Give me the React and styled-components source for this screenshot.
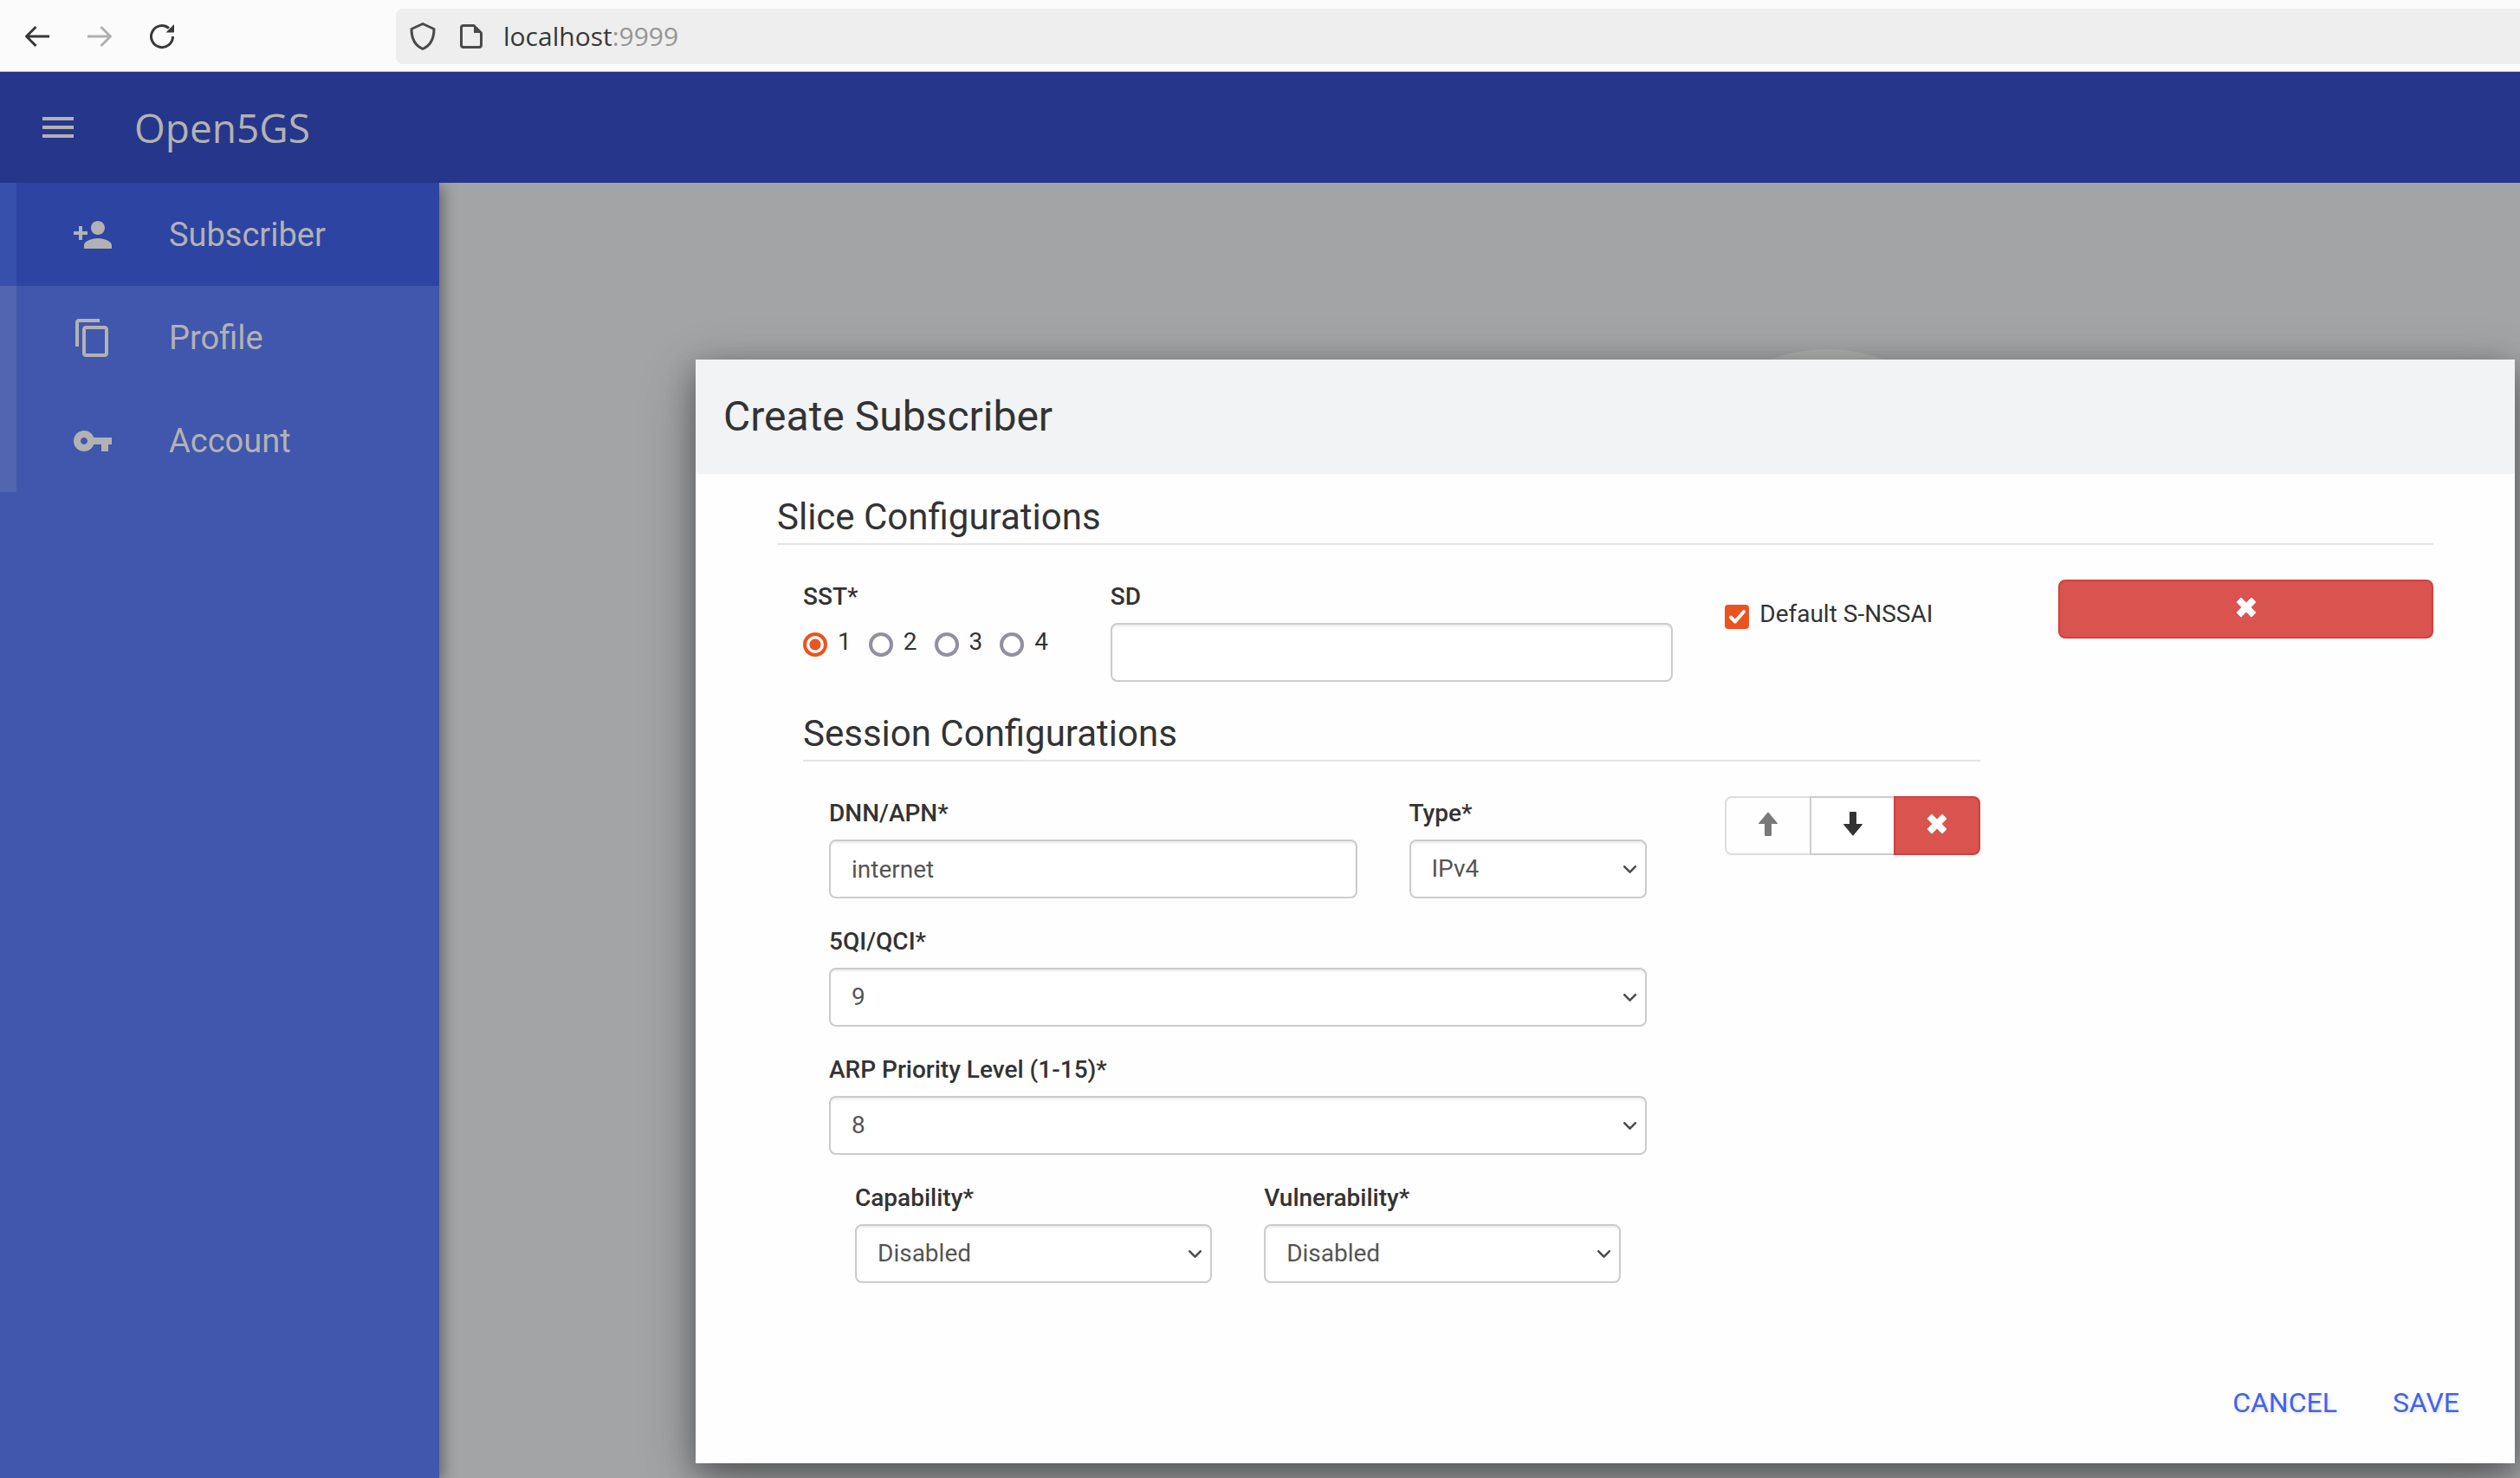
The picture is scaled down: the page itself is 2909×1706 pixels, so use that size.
import React from "react";
import styled, { createGlobalStyle, css } from "styled-components";

const GlobalStyle = createGlobalStyle`
  *, *::before, *::after { box-sizing: border-box; }
  html, body, #root { height: 100%; }
  body {
    margin: 0;
    font-family: Roboto, "Liberation Sans", sans-serif;
    font-size: 28px;
    line-height: 40px;
    color: #333;
    background: #a3a4a6;
  }
  button, input, select { font: inherit; margin: 0; }
`;

const Page = styled.div`
  display: flex;
  flex-direction: column;
  min-height: 100%;
  overflow-x: hidden;
`;

const BrowserBar = styled.div`
  display: flex;
  align-items: center;
  height: 83px;
  padding: 10px 0 9px 24px;
  background: #fbfbfb;
  border-bottom: 1px solid #c8c8c8;
`;

const NavButtons = styled.div`
  display: flex;
  gap: 34px;
  width: 433px;
`;

const ToolButton = styled.button`
  display: flex;
  padding: 0;
  border: 0;
  background: none;
  color: ${(p) => (p.disabled ? "#b0b0b0" : "#383838")};
`;

const AddressBar = styled.div`
  flex: 1;
  display: flex;
  align-items: center;
  gap: 18px;
  height: 64px;
  padding-left: 12px;
  background: #eeeeee;
  border-radius: 8px 0 0 8px;
  color: #4a4a4a;
`;

const Address = styled.span`
  font-family: "Open Sans", "Noto Sans", sans-serif;
  font-size: 30px;
  color: #383838;
`;

const Port = styled.span`
  color: #959595;
`;

const AppHeader = styled.header`
  display: flex;
  align-items: center;
  gap: 64px;
  height: 128px;
  padding: 0 43px;
  background: #26368b;
  color: #b2b2b2;
`;

const MenuButton = styled(ToolButton)`
  color: inherit;
`;

const AppTitle = styled.h1`
  margin: 0;
  font-family: "Open Sans", "Noto Sans", sans-serif;
  font-size: 46px;
  line-height: 64px;
  font-weight: 400;
`;

const Body = styled.div`
  flex: 1;
  display: flex;
`;

const Sidebar = styled.nav`
  position: relative;
  z-index: 1;
  flex: none;
  width: 507px;
  background: #4057ad;
  box-shadow: 4px 4px 16px rgba(0, 0, 0, 0.4);
  clip-path: inset(0 -40px 0 0);
`;

const NavItem = styled.a`
  display: flex;
  align-items: center;
  gap: 64px;
  height: 119px;
  padding-left: 64px;
  border-left: 19px solid ${(p) => (p.$active ? "#3650ac" : "#5265af")};
  background: ${(p) => (p.$active ? "#2d44a3" : "transparent")};
  color: #b2b2b2;
  font-size: 38px;
  text-decoration: none;
`;

const Content = styled.main`
  position: relative;
  flex: 1;
  min-width: 0;
  padding: 204px 6px 17px 296px;
  overflow: hidden;
`;

const Backdrop = styled.div`
  position: absolute;
  top: 192px;
  left: 50%;
  width: 366px;
  height: 366px;
  margin-left: 218px;
  border-radius: 50%;
  background: #adafad;
`;

const Dialog = styled.form`
  position: relative;
  display: flex;
  flex-direction: column;
  height: 100%;
  background: #fefefe;
  box-shadow: 0 20px 60px rgba(0, 0, 0, 0.3), 0 10px 30px rgba(0, 0, 0, 0.3);
`;

const DialogTitle = styled.h2`
  margin: 0;
  padding: 34px 32px;
  background: #f1f3f5;
  font-size: 48px;
  line-height: 64px;
  font-weight: 400;
`;

const DialogBody = styled.div`
  flex: 1;
  padding: 20px 94px 0;
`;

const DialogActions = styled.div`
  display: flex;
  justify-content: flex-end;
  padding: 34px 32px;
`;

const ActionButton = styled.button`
  height: 72px;
  padding: 0 32px;
  border: 0;
  background: none;
  color: #4263eb;
  font-size: 32px;
  text-shadow: 2px 2px 4px rgba(0, 0, 0, 0.12);
`;

const SectionTitle = styled.h3`
  margin: 0 0 40px;
  border-bottom: 2px solid #e5e5e5;
  font-size: 42px;
  line-height: 60px;
  font-weight: 400;
`;

const Grid = styled.div`
  display: grid;
  grid-template-columns: repeat(12, minmax(0, 1fr));
  align-items: start;
  margin: 0 ${(p) => (p.$bleed ? "-30px" : "0")};
`;

const Col = styled.div`
  grid-column: span ${(p) => p.$span};
  padding: 0 30px;
`;

const Inset = styled.div`
  padding: 0 30px;
`;

const FieldBox = styled.div`
  margin-bottom: 30px;
`;

const labelText = css`
  display: block;
  margin-bottom: 10px;
  padding: 0;
  font-weight: 500;
`;

const Label = styled.label`
  ${labelText}
`;

const RadioSet = styled.fieldset`
  margin: 0;
  padding: 0;
  border: 0;
`;

const RadioLegend = styled.legend`
  ${labelText}
`;

const control = css`
  display: block;
  width: 100%;
  height: 68px;
  padding: 0 24px;
  border: 2px solid #ccc;
  border-radius: 8px;
  background: #fff;
  color: #555;
  box-shadow: inset 0 2px 2px rgba(0, 0, 0, 0.075);
`;

const TextInput = styled.input`
  ${control}
`;

const SelectWrap = styled.div`
  display: grid;
  align-items: center;
  > * { grid-area: 1 / 1; }
  > svg {
    justify-self: end;
    margin-right: 12px;
    pointer-events: none;
  }
`;

const Select = styled.select`
  ${control}
  appearance: none;
`;

const Choices = styled.div`
  display: flex;
  gap: 20px;
  padding-top: 2px;
`;

const Choice = styled.label`
  display: flex;
  gap: 12px;
`;

const Radio = styled.input`
  appearance: none;
  flex: none;
  width: 28px;
  height: 28px;
  margin-top: 9px !important;
  border: 4px solid #9190a0;
  border-radius: 50%;
  background: #fff;
  &:checked {
    border-color: #e95420;
    background: radial-gradient(circle, #e95420 6px, #fff 7px);
  }
`;

const CheckRow = styled.div`
  display: flex;
  padding-top: 20px;
`;

const CheckBox = styled.span`
  display: grid;
  width: 28px;
  height: 28px;
  margin-top: 9px;
  > * { grid-area: 1 / 1; }
  > svg { pointer-events: none; }
`;

const CheckInput = styled.input`
  appearance: none;
  width: 28px;
  height: 28px;
  border-radius: 4px;
  background: #e95420;
`;

const IconButton = styled.button`
  display: flex;
  align-items: center;
  justify-content: center;
  width: 100%;
  height: 68px;
  padding: 0 0 4px;
  border: 2px solid ${(p) => (p.$danger ? "#d43f3a" : "#ccc")};
  border-radius: 8px;
  background: ${(p) => (p.$danger ? "#d9534f" : "#fff")};
  color: ${(p) => (p.$danger ? "#fff" : "#333")};
  &:disabled { opacity: 0.65; }
`;

const ButtonGroup = styled.div`
  display: flex;
  > button + button { margin-left: -2px; }
  > button:not(:first-child) { border-top-left-radius: 0; border-bottom-left-radius: 0; }
  > button:not(:last-child) { border-top-right-radius: 0; border-bottom-right-radius: 0; }
`;

const MaterialIcon = ({ d }) => (
  <svg width="48" height="48" viewBox="0 0 24 24" fill="currentColor" aria-hidden="true">
    <path d={d} />
  </svg>
);

const ChromeIcon = ({ children }) => (
  <svg width="38" height="38" viewBox="0 0 38 38" fill="none" stroke="currentColor" strokeWidth="3" strokeLinejoin="round" aria-hidden="true">
    {children}
  </svg>
);

const Cross = () => (
  <svg width="24" height="24" viewBox="0 0 24 24" fill="currentColor" aria-hidden="true">
    <path d="M6.6 1 12 6.400 17.400 1Q18 .5 18.600 1L23 5.400Q23.500 6 23 6.600L17.600 12 23 17.400Q23.500 18 23 18.600L18.600 23Q18 23.500 17.400 23L12 17.600 6.600 23Q6 23.500 5.400 23L1 18.600Q.5 18 1 17.400L6.400 12 1 6.600Q.5 6 1 5.400L5.400 1Q6 .5 6.600 1Z" />
  </svg>
);

const Arrow = ({ down }) => (
  <svg width="24" height="28" viewBox="0 0 24 28" fill="currentColor" aria-hidden="true">
    <path d={down
      ? "M9 0H15Q16 0 16 1V14H22.500Q23.500 14 22.700 15L12.700 27Q12 28 11.300 27L1.300 15Q.5 14 1.500 14H8V1Q8 0 9 0Z"
      : "M9 28H15Q16 28 16 27V14H22.500Q23.500 14 22.700 13L12.700 1Q12 0 11.300 1L1.300 13Q.5 14 1.500 14H8V27Q8 28 9 28Z"} />
  </svg>
);

const Chevron = () => (
  <svg width="15" height="9" viewBox="0 0 15 9" fill="none" stroke="#4d4d4d" strokeWidth="2.600" strokeLinecap="round" strokeLinejoin="round" aria-hidden="true">
    <path d="M1.300 1.300 7.500 7.600 13.700 1.300" />
  </svg>
);

const SelectField = ({ id, label, value, options }) => (
  <FieldBox>
    <Label htmlFor={id}>{label}</Label>
    <SelectWrap>
      <Select id={id} defaultValue={value}>
        {options.map((option) => <option key={option}>{option}</option>)}
      </Select>
      <Chevron />
    </SelectWrap>
  </FieldBox>
);

const NAV = [
  { label: "Subscriber", active: true, d: "M15 12c2.210 0 4-1.790 4-4s-1.790-4-4-4-4 1.790-4 4 1.790 4 4 4zm-9-2V7H4v3H1v2h3v3h2v-3h3v-2H6zm9 4c-2.670 0-8 1.340-8 4v2h16v-2c0-2.660-5.330-4-8-4z" },
  { label: "Profile", d: "M16 1H4c-1.100 0-2 .9-2 2v14h2V3h12V1zm3 4H8c-1.100 0-2 .9-2 2v14c0 1.100.9 2 2 2h11c1.100 0 2-.9 2-2V7c0-1.100-.9-2-2-2zm0 16H8V7h11v14z" },
  { label: "Account", d: "M12.650 10C11.830 7.670 9.610 6 7 6c-3.310 0-6 2.690-6 6s2.690 6 6 6c2.610 0 4.830-1.670 5.650-4H17v4h4v-4h2v-4H12.650zM7 14c-1.100 0-2-.9-2-2s.9-2 2-2 2 .9 2 2-.9 2-2 2z" },
];

export default function App() {
  return (
    <Page>
      <GlobalStyle />
      <BrowserBar>
        <NavButtons>
          <ToolButton aria-label="Back">
            <ChromeIcon><path d="M33 19H7M17.500 8 6.500 19 17.500 30" /></ChromeIcon>
          </ToolButton>
          <ToolButton aria-label="Forward" disabled>
            <ChromeIcon><path d="M5 19H31M20.500 8 31.500 19 20.500 30" /></ChromeIcon>
          </ToolButton>
          <ToolButton aria-label="Reload">
            <ChromeIcon>
              <path d="M31.500 19A12.500 12.500 0 1 1 27 9.500" />
              <path d="M33 5V14.500H23.500Z" fill="currentColor" stroke="none" />
            </ChromeIcon>
          </ToolButton>
        </NavButtons>
        <AddressBar>
          <ChromeIcon><path d="M19 4.500 32 10.500C32 21 28 29.500 19 33.500 10 29.500 6 21 6 10.500Z" /></ChromeIcon>
          <ChromeIcon>
            <path d="M10 6.500H22L30.500 15V29Q30.500 31.500 28 31.500H10Q7.500 31.500 7.500 29V9Q7.500 6.500 10 6.500Z" />
            <path d="M22 6V15H31Z" fill="currentColor" stroke="none" />
          </ChromeIcon>
          <Address>localhost<Port>:9999</Port></Address>
        </AddressBar>
      </BrowserBar>

      <AppHeader>
        <MenuButton aria-label="Menu">
          <MaterialIcon d="M3 18h18v-2H3v2zm0-5h18v-2H3v2zm0-7v2h18V6H3z" />
        </MenuButton>
        <AppTitle>Open5GS</AppTitle>
      </AppHeader>

      <Body>
        <Sidebar>
          {NAV.map((item) => (
            <NavItem key={item.label} href="#" $active={item.active}>
              <MaterialIcon d={item.d} />
              {item.label}
            </NavItem>
          ))}
        </Sidebar>

        <Content>
          <Backdrop />
          <Dialog onSubmit={(event) => event.preventDefault()}>
            <DialogTitle>Create Subscriber</DialogTitle>
            <DialogBody>
              <SectionTitle>Slice Configurations</SectionTitle>
              <Grid $bleed>
                <Col $span={9}>
                  <Grid>
                    <Col $span={3}>
                      <RadioSet>
                        <RadioLegend>SST*</RadioLegend>
                        <Choices>
                          {[1, 2, 3, 4].map((n) => (
                            <Choice key={n}>
                              <Radio type="radio" name="sst" value={n} defaultChecked={n === 1} />
                              {n}
                            </Choice>
                          ))}
                        </Choices>
                      </RadioSet>
                    </Col>
                    <Col $span={6}>
                      <FieldBox>
                        <Label htmlFor="sd">SD</Label>
                        <TextInput id="sd" type="text" />
                      </FieldBox>
                    </Col>
                    <Col $span={3}>
                      <CheckRow>
                        <Choice>
                          <CheckBox>
                            <CheckInput type="checkbox" defaultChecked />
                            <svg width="28" height="28" viewBox="0 0 28 28" fill="none" stroke="#fff" strokeWidth="4" strokeLinecap="round" strokeLinejoin="round" aria-hidden="true">
                              <path d="M7 14.500 12 19.500 22 8" />
                            </svg>
                          </CheckBox>
                          Default S-NSSAI
                        </Choice>
                      </CheckRow>
                    </Col>
                  </Grid>

                  <Inset>
                    <SectionTitle>Session Configurations</SectionTitle>
                  </Inset>
                  <Grid>
                    <Col $span={9}>
                      <Grid>
                        <Col $span={8}>
                          <FieldBox>
                            <Label htmlFor="apn">DNN/APN*</Label>
                            <TextInput id="apn" type="text" defaultValue="internet" />
                          </FieldBox>
                        </Col>
                        <Col $span={4}>
                          <SelectField id="type" label="Type*" value="IPv4" options={["IPv4", "IPv6", "IPv4v6"]} />
                        </Col>
                        <Col $span={12}>
                          <SelectField id="qci" label="5QI/QCI*" value="9" options={["5", "6", "7", "8", "9"]} />
                          <SelectField id="arp" label="ARP Priority Level (1-15)*" value="8" options={["7", "8", "9"]} />
                          <Grid>
                            <Col $span={6}>
                              <SelectField id="capability" label="Capability*" value="Disabled" options={["Disabled", "Enabled"]} />
                            </Col>
                            <Col $span={6}>
                              <SelectField id="vulnerability" label="Vulnerability*" value="Disabled" options={["Disabled", "Enabled"]} />
                            </Col>
                          </Grid>
                        </Col>
                      </Grid>
                    </Col>
                    <Col $span={3}>
                      <ButtonGroup>
                        <IconButton type="button" aria-label="Move up" disabled><Arrow /></IconButton>
                        <IconButton type="button" aria-label="Move down"><Arrow down /></IconButton>
                        <IconButton type="button" aria-label="Remove session" $danger><Cross /></IconButton>
                      </ButtonGroup>
                    </Col>
                  </Grid>
                </Col>
                <Col $span={3}>
                  <IconButton type="button" aria-label="Remove slice" $danger><Cross /></IconButton>
                </Col>
              </Grid>
            </DialogBody>
            <DialogActions>
              <ActionButton type="button">CANCEL</ActionButton>
              <ActionButton type="submit">SAVE</ActionButton>
            </DialogActions>
          </Dialog>
        </Content>
      </Body>
    </Page>
  );
}
